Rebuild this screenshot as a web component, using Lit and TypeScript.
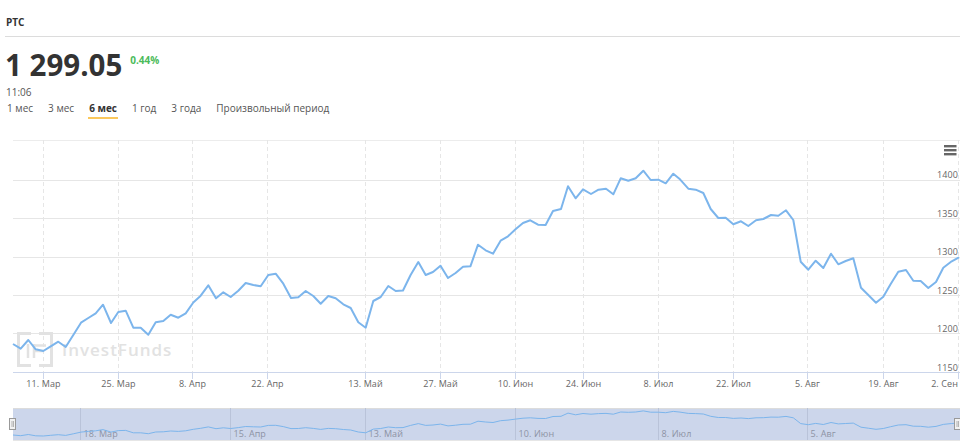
import { LitElement, html, css, svg } from "lit";
import { customElement } from "lit/decorators.js";

const pts: [number, number][] = [
[13,344],[20.7,348.7],[28.3,340],[35.7,349.3],[43.3,351],[50.7,346.3],[58.3,341.7],[65.7,347],[73.3,335],[81,322.7],[88.3,318],[95.7,313.3],[103,304.7],[111,323],[118.3,312],[125.7,310.7],[133.3,327.7],[140.7,327.7],[148.3,334.7],[155.7,322.3],[163.3,321],[170.7,314.7],[178.3,317.7],[185.7,313.3],[193.3,302.5],[200.7,295.7],[208.3,285.3],[216,298.3],[223.3,292.3],[230.7,297],[238.3,290.7],[245.7,283],[253.3,285],[260.7,286.3],[268.3,275],[275.7,273.7],[283.3,283.7],[291,298],[298.3,297.3],[305.7,291],[313.3,296],[320.7,303.7],[328.3,296],[335.7,298.3],[343.3,304.3],[350.7,308],[358.3,322.3],[365.7,327.7],[373.3,301],[380.7,297],[388.3,286],[395.7,291],[403,290.5],[410.6,275],[418.3,262],[425.7,275],[433,272],[440.5,265.7],[448,278],[455.6,273],[463,266.7],[470.4,266.3],[478,244.7],[485.6,250.3],[493,253.7],[500.6,240.7],[508,236.3],[515.5,229.3],[523,223],[530.3,220.3],[538,224.7],[545.6,225],[553,211],[561,209],[568,186.3],[575.6,198.3],[583,189.3],[591,194],[598.5,189.7],[606,188.7],[613.3,194.3],[620.7,178.3],[628.3,180.7],[635.7,178.3],[643.3,170.7],[650.7,180],[658.3,179.7],[665.7,183.3],[673.3,173.7],[680,179.3],[688.3,188.7],[695.7,189.7],[703.3,193],[710.7,209],[718.3,218],[725.7,217.7],[733.3,224.3],[741,221.3],[748.3,226],[756,220.3],[763.3,219],[771,215],[778.3,215.7],[786,210.3],[793.3,220],[800.7,261.7],[808.3,269.7],[815.7,260.7],[823.3,268],[831,253.7],[838.3,264.3],[845.7,261],[853.3,258.3],[861,287.7],[868.3,295],[876,302.7],[883.3,296.7],[890.7,284],[898.3,271.7],[906,270],[913.3,280.7],[920.7,281],[928.3,288],[936,282],[943.3,267.7],[951.7,261.3],[959,257.3]];

const gridY = [180.5, 218.5, 257.5, 295.5, 333.5];
const ticks: [number, string][] = [[43.5,"11. Мар"],[118.5,"25. Мар"],[192.5,"8. Апр"],[267.5,"22. Апр"],[365.5,"13. Май"],[440.5,"27. Май"],[515.5,"10. Июн"],[583.5,"24. Июн"],[658.5,"8. Июл"],[733.5,"22. Июл"],[807.5,"5. Авг"],[883.5,"19. Авг"],[958.5,"2. Сен"]];
const yLabels: [number, string][] = [[178,"1400"],[217,"1350"],[255,"1300"],[294,"1250"],[332,"1200"],[371,"1150"]];
const navTicks: [number, string][] = [[80.5,"18. Мар"],[230.5,"15. Апр"],[365.5,"13. Май"],[515.5,"10. Июн"],[658.5,"8. Июл"],[807.5,"5. Авг"]];

const line = pts.map(p => p.join(",")).join(" ");
const navLine = pts.map(([x, y]) => `${x},${(436 - (351 - y) * 0.139).toFixed(1)}`).join(" ");

@customElement("app-root")
export class AppRoot extends LitElement {
  static styles = css`
    :host { display: block; position: relative; width: 960px; height: 441px; overflow: hidden; background: #fff; font-family: "Open Sans", sans-serif; color: #333; }
    .title { margin-left: 5px; height: 36px; border-bottom: 1px solid #dcdcdc; font-size: 10px; font-weight: 700; line-height: 16px; padding-left: 1px; display: flex; align-items: flex-end; }
    .title span { padding-bottom: 6px; }
    .price-row { display: flex; align-items: flex-start; margin: 7px 0 0 5px; height: 42px; gap: 8px; }
    .price { font-size: 29.5px; font-weight: 700; line-height: 42px; color: #333; }
    .pct { font-size: 10px; font-weight: 700; color: #4cbb5b; line-height: 14px; margin-top: 9px; }
    .time { margin: -1px 0 0 6px; font-size: 10px; line-height: 14px; color: #555; }
    .tabs { display: flex; margin: 2px 0 0 7px; gap: 15px; font-size: 10px; line-height: 14px; color: #555; }
    .tab { padding-bottom: 2px; border-bottom: 2px solid transparent; height: 14px; }
    .tab.on { font-weight: 700; color: #333; border-bottom-color: #fbc85c; padding: 0 1px 2px; margin: 0 -1px; }
    .chart { display: block; position: absolute; left: 0; top: 0; }
    .lbl { font-family: "Open Sans", sans-serif; font-size: 9px; fill: #666; letter-spacing: 0.1px; }
    .nlbl { font-family: "Open Sans", sans-serif; font-size: 9px; fill: #8c93a4; letter-spacing: 0.1px; }
    .wm { font-family: "Open Sans", sans-serif; font-size: 17px; fill: #e2e2e2; letter-spacing: 1px; font-weight: 600; }
  `;

  render() {
    return html`
      <div class="title"><span>РТС</span></div>
      <div class="price-row"><div class="price">1 299.05</div><div class="pct">0.44%</div></div>
      <div class="time">11:06</div>
      <div class="tabs">
        <div class="tab">1 мес</div><div class="tab">3 мес</div><div class="tab on">6 мес</div><div class="tab">1 год</div><div class="tab">3 года</div><div class="tab">Произвольный период</div>
      </div>
      <svg class="chart" width="960" height="441" viewBox="0 0 960 441">
        <line x1="13" x2="960" y1="140.5" y2="140.5" stroke="#ececec"/>
        ${gridY.map(y => svg`<line x1="13" x2="960" y1=${y} y2=${y} stroke="#e6e6e6"/>`)}
        ${ticks.map(([x]) => svg`<line x1=${x} x2=${x} y1="140" y2="372" stroke="#e6e6e6" stroke-dasharray="4 3"/><line x1=${x} x2=${x} y1="372" y2="379" stroke="#ccd6eb"/>`)}
        <line x1="13" x2="960" y1="372.5" y2="372.5" stroke="#ccd6eb"/>
        <g fill="none" stroke="#e2e2e2" stroke-width="3">
          <path d="M31 333.5H18.5V365.5H31M39 333.5H51.5V365.5H39"/>
          <path d="M28 344V358M34 344V358M34 345.5H46M34 351H44" stroke-width="2.5"/>
        </g>
        <text class="wm" x="62" y="356">InvestFunds</text>
        <polyline points=${line} fill="none" stroke="#7cb5ec" stroke-width="2" stroke-linejoin="round"/>
        ${yLabels.map(([y, t]) => svg`<text class="lbl" x="958" y=${y} text-anchor="end">${t}</text>`)}
        ${ticks.map(([x, t], i) => svg`<text class="lbl" x=${i === ticks.length - 1 ? 958 : x} y="387" text-anchor=${i === ticks.length - 1 ? "end" : "middle"}>${t}</text>`)}
        <g fill="#666"><rect x="944" y="145" width="12.5" height="2.4"/><rect x="944" y="149" width="12.5" height="2.4"/><rect x="944" y="153" width="12.5" height="2.4"/></g>
        <rect x="13" y="408" width="947" height="32" fill="#ccd6eb"/>
        <line x1="13" x2="960" y1="408.5" y2="408.5" stroke="#dcdcdc"/>
        <line x1="13" x2="960" y1="440.5" y2="440.5" stroke="#e6e6e6"/>
        ${navTicks.map(([x]) => svg`<line x1=${x} x2=${x} y1="408" y2="440" stroke="#b9c3d9"/>`)}
        ${navTicks.map(([x, t]) => svg`<text class="nlbl" x=${x + 3} y="437">${t}</text>`)}
        <polyline points=${navLine} fill="none" stroke="#7cb5ec" stroke-width="1"/>
        <g fill="#f2f2f2" stroke="#999">
          <rect x="9.5" y="418.5" width="6" height="11"/>
          <rect x="954.5" y="418.5" width="6" height="11"/>
        </g>
        <g stroke="#999"><path d="M12 421V427M13.5 421V427M957 421V427M958.5 421V427" stroke-width="0.7"/></g>
      </svg>
    `;
  }
}
